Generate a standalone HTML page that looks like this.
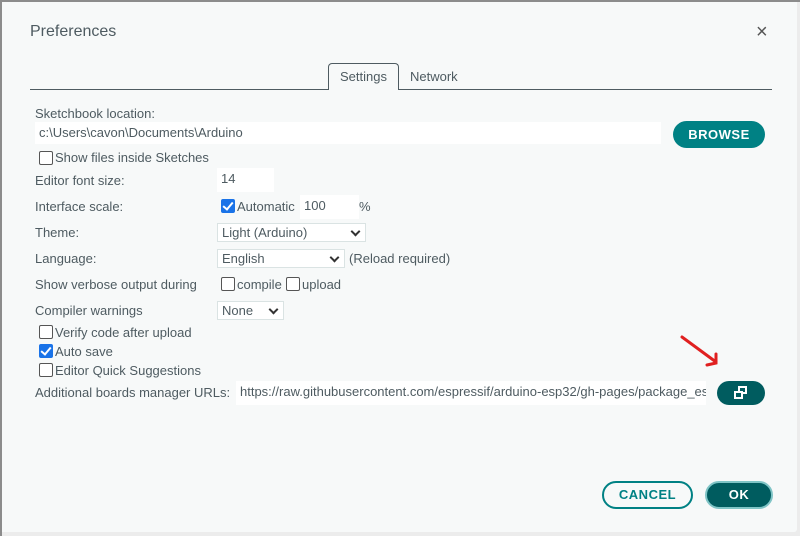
<!DOCTYPE html>
<html><head><style>
body{margin:0;width:800px;height:536px;background:#ececec;font-family:"Liberation Sans",Arial,sans-serif;font-size:13px;color:#4e5b61;position:relative;overflow:hidden}
.lb{position:absolute;left:0;top:0;width:2px;height:536px;background:#8c8c8c}
.tb{position:absolute;left:0;top:0;width:800px;height:2px;background:#8c8c8c}
.dlg{position:absolute;left:2px;top:2px;width:795px;height:530px;background:#f7f9f9;border-radius:0 0 3px 0}
.a{position:absolute;white-space:nowrap}
.in{position:absolute;background:#fff;height:22px;line-height:22px;padding-left:4px;box-sizing:border-box;white-space:nowrap;overflow:hidden;color:#4e5b61}
.sel{position:absolute;background:#fff;border:1px solid #dae3e3;height:19px;line-height:17px;padding-left:4px;box-sizing:border-box}
.sel:after{content:"";position:absolute;right:6px;top:4px;width:5px;height:5px;border-right:2px solid #333;border-bottom:2px solid #333;transform:rotate(45deg)}
.cb{position:absolute;width:12px;height:12px;border:1px solid #555;border-radius:2px;background:#fff}
.cb.on{background:#1a73e8;border-color:#1a73e8}
.cb.on:after{content:"";position:absolute;left:3px;top:0px;width:4px;height:8px;border-right:2px solid #fff;border-bottom:2px solid #fff;transform:rotate(40deg)}
.btn{position:absolute;border-radius:14px;font-weight:bold;text-align:center;letter-spacing:.5px;box-sizing:border-box}
</style></head><body>
<div class="lb"></div><div class="tb"></div>
<div class="dlg">
<div class="a" style="left:28px;top:21px;font-size:16px;color:#4e5b61">Preferences</div>
<div class="a" style="left:754px;top:19px;font-size:20px;color:#555">×</div>
<div style="position:absolute;left:28px;top:87px;width:298px;border-top:1px solid #4e5b61"></div>
<div style="position:absolute;left:326px;top:61px;width:71px;height:27px;border:1px solid #4e5b61;border-bottom:none;border-radius:4px 4px 0 0;background:#f7f9f9;box-sizing:border-box;text-align:center;line-height:26px">Settings</div>
<div style="position:absolute;left:397px;top:87px;width:373px;border-top:1px solid #4e5b61"></div>
<div class="a" style="left:408px;top:67px">Network</div>

<div class="a" style="left:33px;top:104px">Sketchbook location:</div>
<div class="in" style="left:33px;top:120px;width:626px">c:\Users\cavon\Documents\Arduino</div>
<div class="btn" style="left:671px;top:119px;width:92px;height:27px;line-height:27px;background:#008184;color:#fff">BROWSE</div>
<div class="cb" style="left:37px;top:149px"></div><div class="a" style="left:53px;top:148px">Show files inside Sketches</div>
<div class="a" style="left:33px;top:171px">Editor font size:</div>
<div class="in" style="left:215px;top:166px;width:57px;height:24px">14</div>
<div class="a" style="left:33px;top:197px">Interface scale:</div>
<div class="cb on" style="left:219px;top:197px"></div><div class="a" style="left:235px;top:197px">Automatic</div>
<div class="in" style="left:298px;top:193px;width:59px;height:24px">100</div><div class="a" style="left:357px;top:197px">%</div>
<div class="a" style="left:33px;top:223px">Theme:</div>
<div class="sel" style="left:215px;top:221px;width:149px">Light (Arduino)</div>
<div class="a" style="left:33px;top:249px">Language:</div>
<div class="sel" style="left:215px;top:247px;width:128px">English</div>
<div class="a" style="left:347px;top:249px">(Reload required)</div>
<div class="a" style="left:33px;top:275px">Show verbose output during</div>
<div class="cb" style="left:219px;top:275px"></div><div class="a" style="left:235px;top:275px">compile</div>
<div class="cb" style="left:284px;top:275px"></div><div class="a" style="left:300px;top:275px">upload</div>
<div class="a" style="left:33px;top:301px">Compiler warnings</div>
<div class="sel" style="left:215px;top:299px;width:67px">None</div>
<div class="cb" style="left:37px;top:323px"></div><div class="a" style="left:53px;top:323px">Verify code after upload</div>
<div class="cb on" style="left:37px;top:342px"></div><div class="a" style="left:53px;top:342px">Auto save</div>
<div class="cb" style="left:37px;top:361px"></div><div class="a" style="left:53px;top:361px">Editor Quick Suggestions</div>
<div class="a" style="left:33px;top:383px">Additional boards manager URLs:</div>
<div class="in" style="left:234px;top:379px;width:470px;height:24px">https://raw.githubusercontent.com/espressif/arduino-esp32/gh-pages/package_esp32_index.json</div>
<div class="btn" style="left:715px;top:379px;width:48px;height:24px;background:#005c5f"></div>
<svg style="position:absolute;left:730px;top:383px" width="18" height="16" viewBox="0 0 18 16"><rect x="7" y="2" width="7" height="6" fill="none" stroke="#fff" stroke-width="2"/><rect x="3" y="7" width="7" height="6" fill="#005c5f" stroke="#fff" stroke-width="2"/></svg>
<svg style="position:absolute;left:676px;top:332px" width="44" height="36"><path d="M4 3 L38 28" stroke="#e02020" stroke-width="3" stroke-linecap="round"/><path d="M29 31 L38 29 L38 20" fill="none" stroke="#e02020" stroke-width="3" stroke-linecap="round"/></svg>
<div class="btn" style="left:600px;top:479px;width:91px;height:28px;line-height:24px;border:2px solid #008184;color:#008184">CANCEL</div>
<div class="btn" style="left:703px;top:479px;width:68px;height:28px;line-height:24px;background:#005c5f;border:2px solid #7fc4c6;color:#fff">OK</div>
</div>
</body></html>
